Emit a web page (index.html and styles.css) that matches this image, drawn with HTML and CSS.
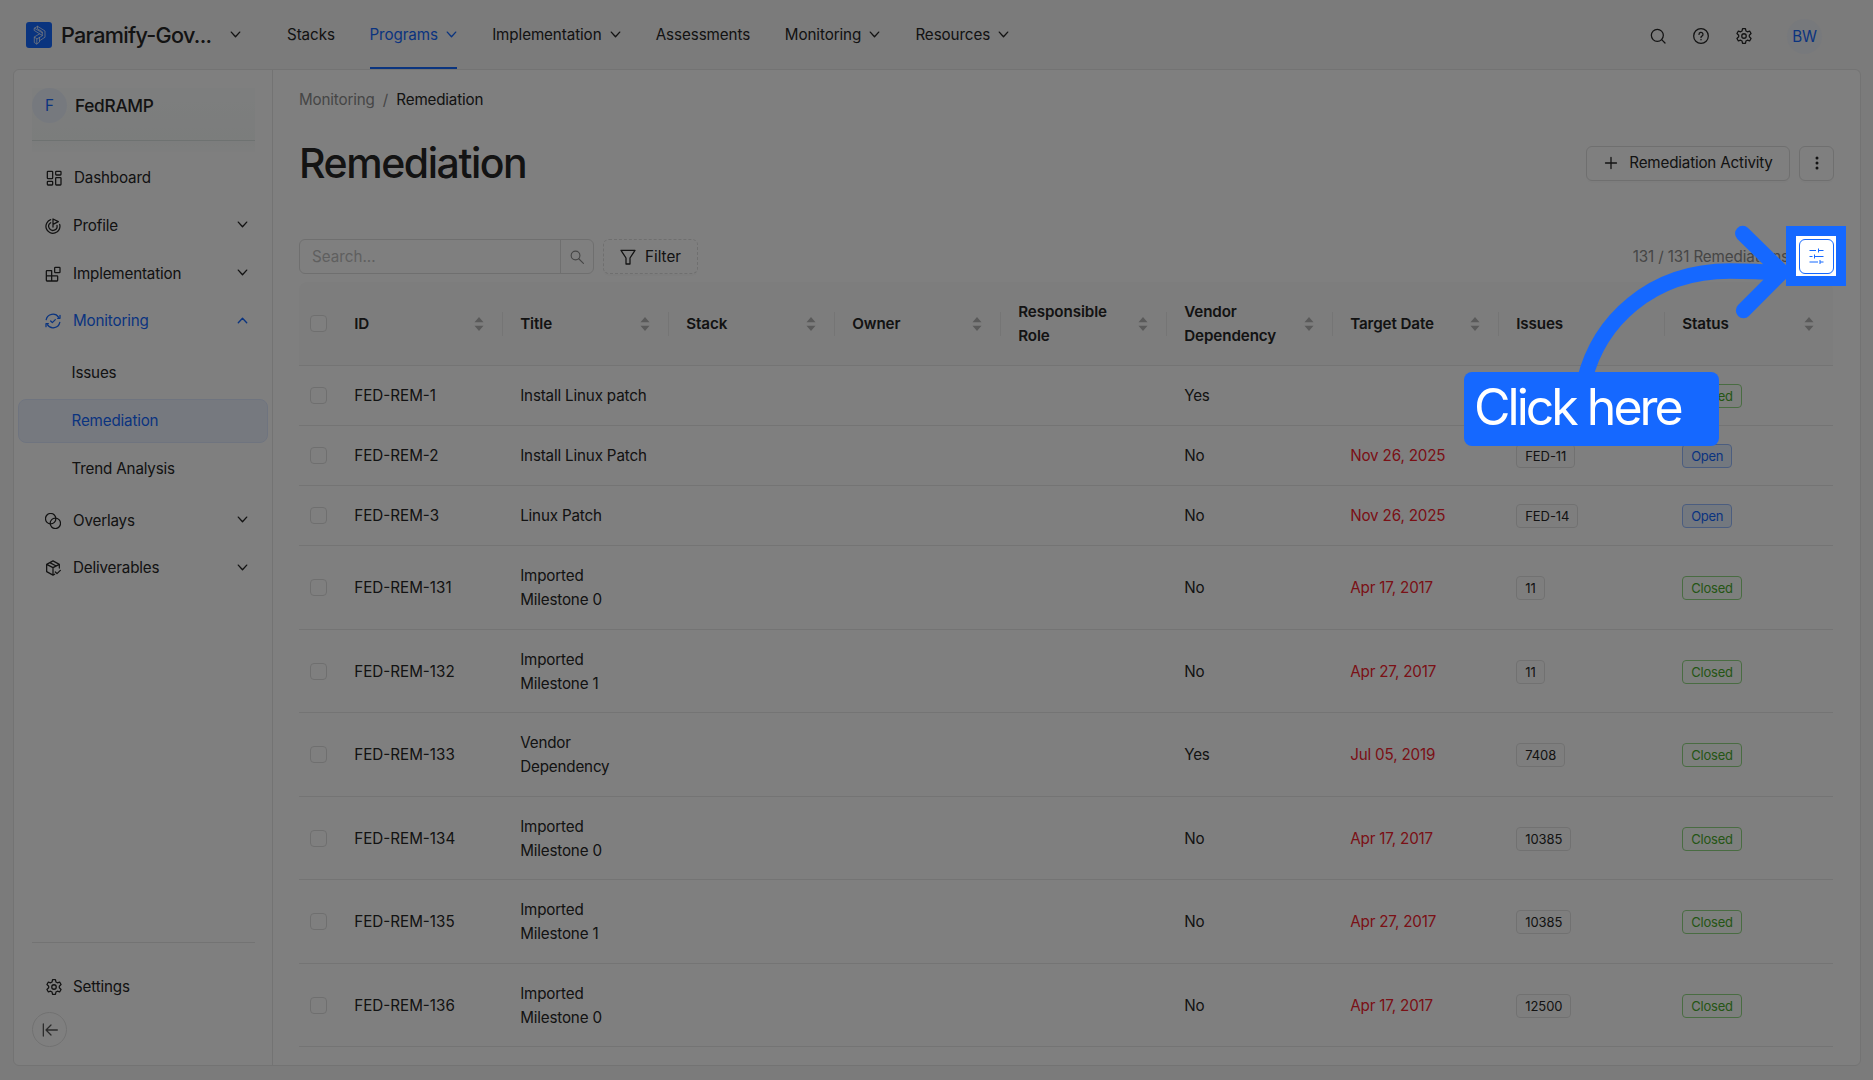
FILE: index.html
```html
<!DOCTYPE html>
<html lang="en">
<head>
<meta charset="utf-8">
<title>Remediation</title>
<link rel="stylesheet" href="styles.css">
</head>
<body>
<svg class="defs" width="0" height="0">
  <symbol id="down" viewBox="0 0 12 12"><path d="M1.4 3.4L6 8.4L10.6 3.4"/></symbol>
  <symbol id="up" viewBox="0 0 12 12"><path d="M1.4 8.4L6 3.6L10.6 8.4"/></symbol>
  <symbol id="sort" viewBox="0 0 10 16"><path d="M5 1L9.5 6.2H0.5ZM5 15L9.5 9.8H0.5Z"/></symbol>
  <symbol id="gear" viewBox="0 0 24 24"><path d="M10.1 2.2H13.9L14.6 5.3L16.5 6.4L19.5 5.4L21.4 8.7L19.1 10.9V13.1L21.4 15.3L19.5 18.6L16.5 17.6L14.6 18.7L13.9 21.8H10.1L9.4 18.7L7.5 17.6L4.5 18.6L2.6 15.3L4.9 13.1V10.9L2.6 8.7L4.5 5.4L7.5 6.4L9.4 5.3Z"/><circle cx="12" cy="12" r="3"/></symbol>
</svg>

<header class="topbar">
  <div class="brand">
    <svg class="logo" viewBox="0 0 26 26">
      <rect width="26" height="26" rx="3" fill="#1568ff"/>
      <g fill="none" stroke="#fff" stroke-width=".7" stroke-linejoin="round">
        <path d="M8.5 6.2L11.5 4.3L19 9V15.2L13.5 18.8V20L10.6 22L8.3 20.5V15L13.6 11.8L8.5 8.6Z"/>
        <path d="M11.5 4.3V6.8L16.3 9.8V13.8L10.8 17V22M8.5 6.2L16.3 10.8M13.6 11.8L16.3 13.4M8.3 15L10.8 16.8M13.5 15.5V18.8"/>
      </g>
    </svg>
    <span class="brand-name">Paramify-Gov...</span>
    <svg class="chev"><use href="#down"/></svg>
  </div>
  <nav class="nav">
    <a class="nav-item">Stacks</a>
    <a class="nav-item active">Programs <svg class="chev"><use href="#down"/></svg></a>
    <a class="nav-item">Implementation <svg class="chev"><use href="#down"/></svg></a>
    <a class="nav-item">Assessments</a>
    <a class="nav-item">Monitoring <svg class="chev"><use href="#down"/></svg></a>
    <a class="nav-item">Resources <svg class="chev"><use href="#down"/></svg></a>
  </nav>
  <div class="tools">
    <svg class="icon" viewBox="0 0 24 24"><circle cx="11" cy="11" r="9"/><path d="M17.5 17.5L22.5 22.5"/></svg>
    <svg class="icon" viewBox="0 0 24 24"><circle cx="12" cy="12" r="11"/><path d="M9 9.6a3 3 0 1 1 4.4 2.6c-.9.5-1.4 1-1.4 2"/><path d="M12 17v.8"/></svg>
    <svg class="icon gear"><use href="#gear"/></svg>
    <span class="avatar user">BW</span>
  </div>
</header>

<div class="shell">
  <aside class="sidebar">
    <div class="program">
      <div class="program-row"><span class="avatar">F</span><span class="program-name">FedRAMP</span></div>
    </div>
    <ul class="menu">
      <li class="menu-item top"><svg class="icon" viewBox="0 0 24 24"><rect x="2" y="2" width="8" height="11" rx="1"/><rect x="14.5" y="2" width="8" height="5.5" rx="1"/><rect x="2" y="17" width="8" height="5.5" rx="1"/><rect x="14.5" y="11.5" width="8" height="11" rx="1"/></svg><span>Dashboard</span></li>
      <li class="menu-item"><svg class="icon" viewBox="0 0 24 24"><path d="M8.5 2.5A10.5 10.5 0 1 0 22 9.5"/><path d="M8.5 7A6.3 6.3 0 1 0 18 11"/><path d="M12 13.5V1.5L20 5.5L12 9.5"/></svg><span>Profile</span><svg class="chev"><use href="#down"/></svg></li>
      <li class="menu-item"><svg class="icon" viewBox="0 0 24 24"><path d="M2 8a1 1 0 0 1 1-1H10V22.5H3a1 1 0 0 1-1-1ZM2 14.7H18a1 1 0 0 1 1 1V21.5a1 1 0 0 1-1 1H10"/><rect x="14.5" y="2" width="8" height="8" rx="1"/></svg><span>Implementation</span><svg class="chev"><use href="#down"/></svg></li>
      <li class="menu-item open"><svg class="icon" viewBox="0 0 24 24"><path d="M1.8 10A10.3 10.3 0 0 1 20.5 6.5M22.2 14A10.3 10.3 0 0 1 3.5 17.5"/><path d="M22.5 3.5V8H19M1.5 20.5V16H5M8.5 12L11 14.5L15.5 10"/></svg><span>Monitoring</span><svg class="chev"><use href="#up"/></svg></li>
      <li>
        <ul class="submenu">
          <li class="menu-item">Issues</li>
          <li class="menu-item selected">Remediation</li>
          <li class="menu-item">Trend Analysis</li>
        </ul>
      </li>
      <li class="menu-item"><svg class="icon" viewBox="0 0 24 24"><circle cx="8.5" cy="8.5" r="7.8"/><circle cx="15.5" cy="15.5" r="7.8"/></svg><span>Overlays</span><svg class="chev"><use href="#down"/></svg></li>
      <li class="menu-item"><svg class="icon" viewBox="0 0 24 24"><path d="M21.5 12V6.5L12 1.3L2.5 6.5V17.5L12 22.7L14.5 21.3M2.5 6.5L12 11.5L21.5 6.5M12 11.5V22.7M7.2 4L16.8 9M15.5 18L18 20.5L23 15.5"/></svg><span>Deliverables</span><svg class="chev"><use href="#down"/></svg></li>
    </ul>
    <div class="side-foot">
      <div class="menu-item top"><svg class="icon gear"><use href="#gear"/></svg><span>Settings</span></div>
      <button class="collapse"><svg class="icon" viewBox="0 0 24 24"><path d="M2 3V21M23 12H6M13.5 4.5L6 12L13.5 19.5"/></svg></button>
    </div>
  </aside>

  <main class="content">
    <div class="crumbs"><span>Monitoring</span><span>/</span><b>Remediation</b></div>
    <div class="title-row">
      <h1>Remediation</h1>
      <button class="btn add"><svg class="icon" viewBox="0 0 16 16"><path d="M8 2.5V13.5M2.5 8H13.5"/></svg>Remediation Activity</button>
      <button class="btn square"><svg class="dots" viewBox="0 0 4 14"><circle cx="2" cy="2" r="1.5"/><circle cx="2" cy="7" r="1.5"/><circle cx="2" cy="12" r="1.5"/></svg></button>
    </div>
    <div class="toolbar">
      <div class="search">
        <span class="search-text">Search...</span>
        <span class="search-btn"><svg class="icon" viewBox="0 0 24 24"><circle cx="9.5" cy="9.5" r="7.5"/><path d="M15 15L23 23"/></svg></span>
      </div>
      <button class="btn filter"><svg class="icon" viewBox="0 0 24 24"><path d="M1.5 2H22.5L15 13.5V22.5H9V13.5Z"/></svg>Filter</button>
      <span class="count">131 / 131 Remediations</span>
      <button class="btn square columns"><svg class="icon" viewBox="0 0 15 16"><path d="M.5 2.5H7M9.5 2.5H14.5M9.5 .5V4.5M.5 8.5H3.5M5.5 8.5H14.5M5.5 6.5V10.5M.5 14H9M11 14H14.5M11 12V16"/></svg></button>
    </div>

    <table class="grid">
      <colgroup><col class="c-check"><col><col><col><col><col><col><col><col><col class="c-last"></colgroup>
      <thead>
        <tr>
          <th class="check"><i class="box"></i></th>
          <th><div class="th">ID<svg class="sort"><use href="#sort"/></svg></div></th>
          <th><div class="th">Title<svg class="sort"><use href="#sort"/></svg></div></th>
          <th><div class="th">Stack<svg class="sort"><use href="#sort"/></svg></div></th>
          <th><div class="th">Owner<svg class="sort"><use href="#sort"/></svg></div></th>
          <th><div class="th">Responsible<br>Role<svg class="sort"><use href="#sort"/></svg></div></th>
          <th><div class="th">Vendor<br>Dependency<svg class="sort"><use href="#sort"/></svg></div></th>
          <th><div class="th">Target Date<svg class="sort"><use href="#sort"/></svg></div></th>
          <th><div class="th">Issues</div></th>
          <th><div class="th">Status<svg class="sort"><use href="#sort"/></svg></div></th>
        </tr>
      </thead>
      <tbody>
        <tr class="short"><td class="check"><i class="box"></i></td><td class="id">FED-REM-1</td><td>Install Linux patch</td><td></td><td></td><td></td><td>Yes</td><td></td><td></td><td><span class="tag closed">Closed</span></td></tr>
        <tr class="short"><td class="check"><i class="box"></i></td><td class="id">FED-REM-2</td><td>Install Linux Patch</td><td></td><td></td><td></td><td>No</td><td class="late">Nov 26, 2025</td><td><span class="tag">FED-11</span></td><td><span class="tag opened">Open</span></td></tr>
        <tr class="short"><td class="check"><i class="box"></i></td><td class="id">FED-REM-3</td><td>Linux Patch</td><td></td><td></td><td></td><td>No</td><td class="late">Nov 26, 2025</td><td><span class="tag">FED-14</span></td><td><span class="tag opened">Open</span></td></tr>
        <tr><td class="check"><i class="box"></i></td><td class="id">FED-REM-131</td><td>Imported<br>Milestone 0</td><td></td><td></td><td></td><td>No</td><td class="late">Apr 17, 2017</td><td><span class="tag">11</span></td><td><span class="tag closed">Closed</span></td></tr>
        <tr><td class="check"><i class="box"></i></td><td class="id">FED-REM-132</td><td>Imported<br>Milestone 1</td><td></td><td></td><td></td><td>No</td><td class="late">Apr 27, 2017</td><td><span class="tag">11</span></td><td><span class="tag closed">Closed</span></td></tr>
        <tr><td class="check"><i class="box"></i></td><td class="id">FED-REM-133</td><td>Vendor<br>Dependency</td><td></td><td></td><td></td><td>Yes</td><td class="late">Jul 05, 2019</td><td><span class="tag">7408</span></td><td><span class="tag closed">Closed</span></td></tr>
        <tr><td class="check"><i class="box"></i></td><td class="id">FED-REM-134</td><td>Imported<br>Milestone 0</td><td></td><td></td><td></td><td>No</td><td class="late">Apr 17, 2017</td><td><span class="tag">10385</span></td><td><span class="tag closed">Closed</span></td></tr>
        <tr><td class="check"><i class="box"></i></td><td class="id">FED-REM-135</td><td>Imported<br>Milestone 1</td><td></td><td></td><td></td><td>No</td><td class="late">Apr 27, 2017</td><td><span class="tag">10385</span></td><td><span class="tag closed">Closed</span></td></tr>
        <tr><td class="check"><i class="box"></i></td><td class="id">FED-REM-136</td><td>Imported<br>Milestone 0</td><td></td><td></td><td></td><td>No</td><td class="late">Apr 17, 2017</td><td><span class="tag">12500</span></td><td><span class="tag closed">Closed</span></td></tr>
      </tbody>
    </table>
  </main>
</div>

<!-- guided tour step: dims the page around the columns button -->
<div class="spotlight"></div>
<svg class="arrow" viewBox="1560 220 240 170">
  <path d="M1584.5 380C1599 322 1650 271 1730 271Q1756 271 1780 273M1742.7 233.5L1782 272L1743.5 310.5"/>
</svg>
<div class="frame"></div>
<div class="callout">Click here</div>
</body>
</html>
```
FILE: styles.css
```css
* { box-sizing: border-box; }
body { margin: 0; height: 1080px; overflow: hidden; position: relative; display: flex; flex-direction: column; background: #f6f6f6; color: #262626; font-family: Inter, "Liberation Sans", sans-serif; font-size: 15.2px; line-height: 24px; letter-spacing: -0.17px; }
svg { flex: none; fill: none; stroke: currentColor; stroke-linecap: round; stroke-linejoin: round; }
ul { list-style: none; margin: 0; padding: 0; }
button { font: inherit; letter-spacing: inherit; color: inherit; }
.defs { position: absolute; }
.icon { width: 16px; height: 16px; stroke-width: 1.9; }
.icon.gear { width: 18px; height: 18px; stroke-width: 1.7; }
.chev { width: 11px; height: 11px; stroke-width: 1.5; }

/* top bar */
.topbar { height: 69px; flex: none; display: flex; align-items: center; padding: 0 51px 0 26px; }
.brand { display: flex; align-items: center; width: 261px; }
.logo { width: 26px; height: 26px; stroke: none; }
.brand-name { width: 169px; margin-left: 9px; font-size: 21.6px; font-weight: 500; letter-spacing: -0.7px; }
.nav { display: flex; gap: 34.7px; height: 69px; letter-spacing: -0.09px; }
.nav-item { display: flex; align-items: center; gap: 8px; border-bottom: 2px solid transparent; padding-top: 2px; }
.nav-item .chev { margin-right: .5px; }
.nav-item.active { color: #1568ff; border-color: #1568ff; }
.tools { display: flex; align-items: center; margin-left: auto; margin-top: 4px; }
.tools .icon { margin: -1px 27px 0 0; }
.tools .icon.gear { margin: -1px 34px 0 -1px; }
.avatar { display: flex; align-items: center; justify-content: center; width: 35px; height: 35px; border-radius: 50%; background: #edf3fd; color: #1568ff; }
.avatar.user { background: #eff2f8; }

/* shell */
.shell { flex: none; display: flex; width: 1848px; height: 997px; margin-left: 13px; background: #fff; border: 1px solid #e6e6e6; border-radius: 6px; }
.sidebar { width: 259px; flex: none; display: flex; flex-direction: column; border-right: 1px solid #e6e6e6; }
.program { margin: 18px 17px 0 18px; height: 64px; background: linear-gradient(#fbfdfd, #f7faf9 50px, #fcfdfd); }
.program-row { height: 53px; padding-bottom: 17px; display: flex; align-items: center; border-bottom: 1px solid #dce4e2; }
.program-name { margin-left: 8px; font-size: 17.3px; font-weight: 500; letter-spacing: -0.3px; }
.menu { padding: 4.5px 4px 0; }
.menu-item { display: flex; align-items: center; height: 43.4px; margin-bottom: 4.3px; padding-left: 27px; border-radius: 8px; }
.menu-item span { margin-left: 12px; flex: 1; }
.menu-item.top { padding-left: 28px; }
.menu-item .chev { margin: -2px 20px 0 0; }
.menu-item.open { color: #1568ff; }
.submenu { padding: 4.3px 0; }
.submenu .menu-item { padding-left: 53.5px; }
.submenu .menu-item.selected { background: #edf3ff; border: 1px solid #dfe9ff; color: #1568ff; padding-left: 52.5px; }
.side-foot { margin: auto 17px 18px 18px; padding-top: 22px; border-top: 1px solid #e6e6e6; }
.side-foot .menu-item { padding-left: 13px; margin-bottom: 3.3px; }
.side-foot .menu-item span { margin-left: 10px; }
.collapse { display: flex; align-items: center; justify-content: center; width: 35px; height: 35px; border: 1px solid #e3e3e3; border-radius: 50%; background: #fff; color: #555; }

/* content */
.content { flex: 1; padding: 18px 27px 0 26px; }
.crumbs { display: flex; gap: 8.2px; color: #8c8c8c; }
.crumbs b { font-weight: 400; color: #262626; }
.title-row { display: flex; align-items: center; margin: 21px -1px 0 0; height: 60px; }
h1 { margin: 0 auto 0 0; font-size: 41px; line-height: 52px; font-weight: 500; letter-spacing: -1.45px; }
.btn { display: flex; align-items: center; justify-content: center; height: 35px; padding: 0; background: #fff; border: 1px solid #dedede; border-radius: 6px; box-shadow: 0 2px 0 rgba(0,0,0,.02); }
.btn.square { width: 35px; }
.add { width: 204px; gap: 10px; margin-right: 9px; }
.add .icon { stroke-width: 1.3; }
.dots { width: 4px; height: 14px; fill: currentColor; stroke: none; }
.toolbar { display: flex; align-items: center; margin: 46px -1px 0 0; }
.search { display: flex; width: 295px; height: 35px; border: 1px solid #dedede; border-radius: 6px; line-height: 33px; }
.search-text { flex: 1; padding-left: 12px; color: #bfbfbf; letter-spacing: 0; }
.search-btn { display: flex; align-items: center; justify-content: center; width: 33px; border-left: 1px solid #dedede; color: #8c8c8c; }
.search-btn .icon { width: 14px; height: 14px; }
.filter { width: 95px; margin-left: 9px; gap: 9px; border-style: dashed; letter-spacing: 0; }
.count { margin: 0 10px 0 auto; color: #8c8c8c; letter-spacing: -0.1px; }
.columns { color: #1568ff; border-color: #1568ff; }
.columns .icon { width: 15px; margin-top: -1px; stroke-width: 1; stroke-linecap: butt; }

/* table */
.grid { width: 1534px; margin-top: 8px; border-collapse: separate; border-spacing: 0; table-layout: fixed; }
.grid col { width: 166px; }
.grid .c-check { width: 38px; }
.grid .c-last { width: 168px; }
.grid th, .grid td { padding: 1px 17.2px 0; text-align: left; vertical-align: middle; height: 83.5px; border-bottom: 1px solid #e8e8e8; }
.grid th { height: 84px; background: #fafafa; font-weight: 600; letter-spacing: -0.1px; }
.grid th:first-child { border-top-left-radius: 8px; }
.grid th:last-child { border-top-right-radius: 8px; }
.grid .short td { height: 60.1px; }
.grid .check { padding: 0 0 0 11px; }
.grid .id { letter-spacing: 0; }
.box { display: block; width: 17px; height: 17px; background: #fff; border: 1px solid #dedede; border-radius: 4px; }
.th { display: flex; align-items: center; justify-content: space-between; position: relative; }
.grid th:not(.check):not(:last-child) .th::after { content: ""; position: absolute; right: -17px; top: 50%; width: 1px; height: 24px; margin-top: -12px; background: #ebebeb; }
.sort { width: 10px; height: 16px; margin-right: 2px; fill: #b4b4b4; stroke: none; }
.late { color: #f5222d; }
.tag { display: block; width: fit-content; height: 24px; padding: 0 8px; border: 1px solid #e3e3e3; border-radius: 4px; background: #fdfdfd; font-size: 13px; line-height: 22px; letter-spacing: -0.05px; }
.tag.opened { color: #1568ff; background: #e6f0ff; border-color: #97bbff; letter-spacing: -0.3px; }
.tag.closed { color: #4bab2c; background: #fafffa; border-color: #93d884; letter-spacing: -0.2px; }

/* tour step */
.spotlight { position: absolute; left: 1796px; top: 236px; width: 40px; height: 40px; box-shadow: 0 0 0 2000px rgba(0,0,0,.5); }
.arrow { position: absolute; left: 1560px; top: 220px; width: 240px; height: 170px; stroke: #1568ff; stroke-width: 15.3; }
.frame { position: absolute; left: 1786px; top: 226px; width: 60px; height: 60px; border: 10px solid #1568ff; }
.callout { position: absolute; left: 1464px; top: 372px; width: 255px; height: 74px; padding-left: 10px; border-radius: 8px; background: #1568ff; color: #fff; font-size: 50px; line-height: 70px; letter-spacing: -3px; }
```
